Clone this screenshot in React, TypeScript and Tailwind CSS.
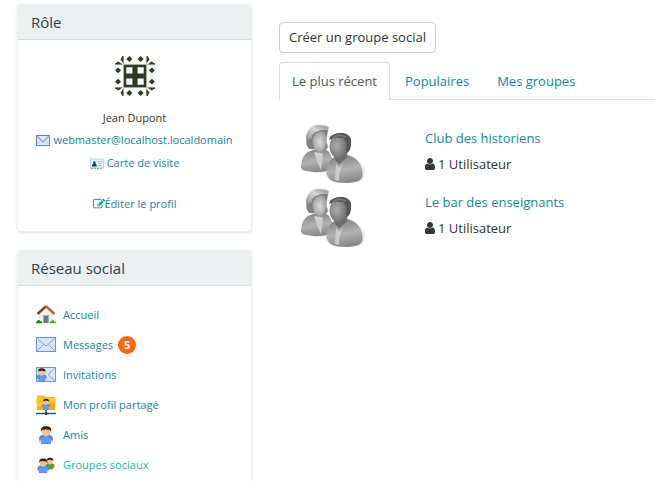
import type { ReactNode } from "react";

function Identicon() {
  const dots = [
    [14, 3], [25, 3], [14, 36], [25, 36],
    [3, 14], [3, 25], [36, 14], [36, 25],
  ];
  return (
    <svg width="40" height="40" viewBox="0 0 39 39" fill="#2c3a1d" role="img" aria-label="Avatar">
      <path d="M8.5 0v39M30.5 0v39M0 8.5h39M0 30.5h39" stroke="#c3c5bd" strokeWidth="0.7" />
      <rect x="8.5" y="8.5" width="22" height="22" />
      <path fill="#fff" d="M11 11h6v6h-6zM22 11h6v6h-6zM11 22h6v6h-6zM22 22h6v6h-6z" />
      {dots.map(([x, y]) => (
        <path key={`${x}-${y}`} d="M0-2.9L2.9 0 0 2.9-2.9 0z" transform={`translate(${x} ${y})`} />
      ))}
      {[0, 90, 180, 270].map((a) => (
        <path key={a} transform={`rotate(${a} 19.5 19.5)`} d="M8.3 0v7L5.4 3.5 7.3 0zM0 8.2h7.2L3.2 5.4 0 7.3z" />
      ))}
    </svg>
  );
}

function Envelope({ small = false }: { small?: boolean }) {
  return small ? (
    <svg width="14" height="11" viewBox="0 0 14 11" fill="none" aria-hidden="true">
      <rect x="0.5" y="0.5" width="13" height="10" fill="#deebfc" stroke="#5d83c9" />
      <path d="M1 9.5l4-4M13 9.5l-4-4" stroke="#b6cdf0" />
      <path d="M1.5 1.5L7 7l5.5-5.5" stroke="#87a6df" strokeWidth="1.3" />
    </svg>
  ) : (
    <svg width="20" height="20" viewBox="0 0 20 20" fill="none" aria-hidden="true">
      <rect x="0.5" y="2.5" width="19" height="14" fill="#d5e5fb" stroke="#6f94d2" />
      <path d="M1.5 15.5l6-6M18.5 15.5l-6-6M1.5 3.5l7.5 7h2l7.5-7" stroke="#83a5da" />
    </svg>
  );
}

function Card() {
  return (
    <svg width="14" height="11" viewBox="0 0 14 11" aria-hidden="true">
      <rect x="0.5" y="1" width="13" height="9" fill="#e4eff2" stroke="#b9dbe3" />
      <path d="M1 10.3h12" stroke="#58aabd" strokeDasharray="2 1" />
      <path fill="#123f50" d="M2 8.5V7l1.2-1V3.5h2.3V6l1.2 1v1.5z" />
      <path d="M7.5 3.5h5M8 5.5h4M8 7.5h4" stroke="#b9c1c4" />
    </svg>
  );
}

function EditIcon() {
  return (
    <svg width="12" height="12" viewBox="0 0 1792 1792" fill="currentColor" aria-hidden="true">
      <path d="M888 1184l116-116-152-152-116 116v56h96v96h56zm440-720q-16-16-33 1l-350 350q-17 17-1 33t33-1l350-350q17-17 1-33zm80 594v190q0 119-84.5 203.5t-203.5 84.5h-832q-119 0-203.5-84.5t-84.5-203.5v-832q0-119 84.5-203.5t203.5-84.5h832q63 0 117 25 15 7 18 23 3 17-9 29l-49 49q-14 14-32 8-23-6-45-6h-832q-66 0-113 47t-47 113v832q0 66 47 113t113 47h832q66 0 113-47t47-113v-126q0-13 9-22l64-64q15-15 35-7t20 29zm-96-738l288 288-672 672h-288v-288zm444 132l-92 92-288-288 92-92q28-28 68-28t68 28l152 152q28 28 28 68t-28 68z" />
    </svg>
  );
}

function UserIcon() {
  return (
    <svg width="10" height="14" viewBox="0 0 1280 1792" fill="#333" aria-hidden="true">
      <path d="M1280 1399q0 109-62.5 187t-150.5 78h-854q-88 0-150.5-78t-62.5-187q0-85 8.5-160.5t31.5-152 58.5-131 94-89 134.5-34.5q131 128 313 128t313-128q76 0 134.5 34.5t94 89 58.5 131 31.5 152 8.5 160.5zm-256-887q0 159-112.5 271.5t-271.5 112.5-271.5-112.5-112.5-271.5 112.5-271.5 271.5-112.5 271.5 112.5 112.5 271.5z" />
    </svg>
  );
}

function House() {
  return (
    <svg width="20" height="20" viewBox="0 0 20 20" aria-hidden="true">
      <path fill="#f2f2f2" stroke="#d5d5d5" strokeWidth="0.6" d="M3.5 17.5V8.5L10 3l6.5 5.5v9z" />
      <path d="M7 10h6v8H7z" fill="#aaa" />
      <path d="M8 11h4v7H8z" fill="#777" />
      <path d="M1.5 9L10 1.2" stroke="#8a3c12" strokeWidth="2.4" fill="none" />
      <path d="M10 1.2L18.500 9" stroke="#bb6538" strokeWidth="2.400" fill="none" />
      <path d="M0 18.300c0-2 1.500-2 2-3 1-.8 2 0 2.200 1 1.500-.5 2 .5 2 2z" fill="#128512" />
      <path d="M13.500 18.300c0-2 1.500-2 2-2.300 1-1.500 2.500-1 2.500.3 1.500 0 2 .7 2 2z" fill="#49b012" />
    </svg>
  );
}

function Figure({ shirt = "#4d8df0" }: { shirt?: string }) {
  return (
    <g>
      <path d="M3 14c0-3 2.200-4.200 4-4.200h6c2 0 4 1.200 4 4.200l-.5 2H15v3H5v-3H3.500z" fill={shirt} />
      <path d="M5.300 12.500h9.400v5.800H5.300z" fill="#69a7fa" opacity={shirt === "#4d8df0" ? 0.6 : 0} />
      <path d="M7.500 9.500h5L10 12z" fill="#f4b98b" />
      <circle cx="4.200" cy="16.300" r="1.200" fill="#f6b98c" />
      <circle cx="15.800" cy="16.300" r="1.200" fill="#f6b98c" />
      <ellipse cx="10" cy="6.500" rx="4.300" ry="4.500" fill="#f8bd91" />
      <path d="M5 7C4.500 3 6.500 1 10 1.200c4 0 6 2 5 5.800l-1.200-2.300c-2 .5-3-.2-4-.7C8.500 5 7 5 6 4.700z" fill="#30221d" />
    </g>
  );
}

function Invitation() {
  return (
    <svg width="20" height="20" viewBox="0 0 20 20" aria-hidden="true">
      <path d="M.5 2.500h19v14H.5z" fill="#d5e5fb" stroke="#6f94d2" />
      <path d="M18.500 3.500L12 9.500l6.500 6" stroke="#83a5da" fill="none" />
      <g transform="translate(-1.500 2.500) scale(.72)"><Figure /></g>
    </svg>
  );
}

function Folder() {
  return (
    <svg width="20" height="20" viewBox="0 0 20 20" aria-hidden="true">
      <path d="M1 2V.5h7L9.500 2H19v4H1z" fill="#f0bc23" />
      <path d="M0 3.500h20L19 15H1z" fill="#ffc928" />
      <path d="M1 12l18-5v8H1z" fill="#ffa70e" />
      <path d="M0 18.500h20M10 15v4" stroke="#235e82" strokeWidth="1.600" />
      <circle cx="10" cy="18.500" r="1.500" fill="#133f5c" />
      <g transform="translate(4 3) scale(.6)"><Figure /></g>
    </svg>
  );
}

function Friend() {
  return <svg width="20" height="20" viewBox="0 0 20 20" aria-hidden="true"><Figure /></svg>;
}

function Friends() {
  return (
    <svg width="20" height="20" viewBox="0 0 20 20" aria-hidden="true">
      <g transform="translate(7.500 2) scale(.65)"><Figure shirt="#5fa01a" /></g>
      <g transform="translate(-1 2.500) scale(.82)"><Figure /></g>
    </svg>
  );
}

function GroupPicture({ id }: { id: string }) {
  return (
    <svg width="64" height="64" viewBox="0 0 64 64" aria-hidden="true">
      <defs>
        <linearGradient id={`${id}-body`} x1="0" y1="0" x2="0.2" y2="1">
          <stop stopColor="#7c7c7c" /><stop offset=".6" stopColor="#b2b2b2" /><stop offset="1" stopColor="#8b8b8b" />
        </linearGradient>
        <radialGradient id={`${id}-pale`} cx=".5" cy=".55">
          <stop stopColor="#dcdcdc" /><stop offset="1" stopColor="#a0a0a0" />
        </radialGradient>
        <linearGradient id={`${id}-cap`} x1="0" y1="1" x2=".8" y2="0">
          <stop stopColor="#8f8f8f" /><stop offset=".6" stopColor="#d6d6d6" /><stop offset="1" stopColor="#9c9c9c" />
        </linearGradient>
        <radialGradient id={`${id}-face`} cx=".4" cy=".45" r=".65">
          <stop stopColor="#adadad" /><stop offset="1" stopColor="#6c6c6c" />
        </radialGradient>
        <radialGradient id={`${id}-shade`}>
          <stop stopColor="#777" stopOpacity=".7" /><stop offset="1" stopColor="#777" stopOpacity="0" />
        </radialGradient>
      </defs>
      <ellipse cx="54" cy="50" rx="11" ry="12" fill={`url(#${id}-shade)`} />
      <path d="M8 27C4 22 5 13 7 10c3-4 7-6 12-6 4 0 7 1 8 4l-2 12c3 4 2 8-2 8z" fill="#808080" />
      <path d="M0 45c0-9 4-15 12-17l10-1c7 1 10 7 10 20-7 4-23 4-30 1-2-1-2-2-2-3z" fill={`url(#${id}-body)`} />
      <path d="M13 30l8 1 1 3-2 14-4-9z" fill="#cdcdcd" />
      <ellipse cx="18.500" cy="19" rx="7" ry="11" fill={`url(#${id}-pale)`} />
      <path d="M5 17C5 9 10 3 17 3c6 0 10 1 11 3l-1 3c-6-1-12 1-15 5-2 3-5 5-7 3z" fill={`url(#${id}-cap)`} />
      <path d="M11 15c3-5 9-7 16-6" stroke="#757575" strokeWidth="1.200" fill="none" />
      <path d="M25.500 50c0-8 4-14 10-16l11-1c10 3 15 9 15 20 0 6-7 8-17 8-12 0-19-3-19-11z" fill={`url(#${id}-body)`} />
      <path d="M35 42l3 3 4-3c-3 5-4 11-4 17l-4-1z" fill="#cbcbcb" />
      <path d="M34 33l12-4v5c-2 4-5 6-8 8l-4-4z" fill="#6c6c6c" />
      <path d="M29 17c2-4 6-6 11-6 7 0 11 4 10 11 0 4-1 7-4 9l-6-8z" fill="#555" />
      <ellipse cx="37" cy="24.500" rx="8.500" ry="11.500" fill={`url(#${id}-face)`} />
      <path d="M28 18c1-5 6-7 12-7s10 4 10 8c-3-3-6-3-9-3-4-1-9-1-13 2z" fill="#555" />
      <path d="M32 15c4-2 9-2 13 0" stroke="#737373" strokeWidth="1.500" fill="none" />
    </svg>
  );
}

function Panel({ title, children }: { title: string; children: ReactNode }) {
  return (
    <section className="rounded border border-[#eeeeee] bg-white shadow-sm">
      <h2 className="rounded-t border-b border-[#d5dbdb] bg-[#ecf0f1] px-[13px] py-2 text-[15px] leading-[18px] text-[#2c3e50]">{title}</h2>
      {children}
    </section>
  );
}

const menu = [
  { label: "Accueil", icon: <House /> },
  { label: "Messages", icon: <Envelope />, count: 5 },
  { label: "Invitations", icon: <Invitation /> },
  { label: "Mon profil partagé", icon: <Folder /> },
  { label: "Amis", icon: <Friend /> },
  { label: "Groupes sociaux", icon: <Friends />, active: true },
];

const tabs = ["Le plus récent", "Populaires", "Mes groupes"];
const groups = [
  { id: "historiens", name: "Club des historiens" },
  { id: "enseignants", name: "Le bar des enseignants" },
];

export default function App() {
  return (
    <div className="flex h-screen items-start gap-[27px] overflow-hidden bg-white pl-[17px] font-['Open_Sans','Noto_Sans',sans-serif] text-[13px] leading-[18px] text-[#333]">
      <aside className="flex w-[235px] shrink-0 flex-col gap-[18px] pt-1">
        <Panel title="Rôle">
          <div className="flex flex-col items-center pt-4 pb-[18px] text-[11px] leading-[18px] text-[#0f87a3]">
            <Identicon />
            <p className="mt-[13px] text-[#333]">Jean Dupont</p>
            <a href="#mail" className="mt-1 flex items-center gap-[3px]"><Envelope small />webmaster@localhost.localdomain</a>
            <a href="#card" className="mt-[5px] flex items-center gap-[3px]"><Card />Carte de visite</a>
            <a href="#edit" className="mt-[23px] flex items-center"><EditIcon />Éditer le profil</a>
          </div>
        </Panel>
        <Panel title="Réseau social">
          <nav>
            <ul className="px-[18px] pt-[14px] pb-4 text-[11px]">
              {menu.map((item) => (
                <li key={item.label}>
                  <a href="#menu" className={`flex items-center gap-[7px] py-[5px] ${item.active ? "text-[#1abc9c]" : "text-[#0f87a3]"}`}>
                    {item.icon}
                    <span className="flex items-center gap-[5px]">
                      {item.label}
                      {item.count && <span className="flex h-[18px] w-[18px] items-center justify-center rounded-full bg-[#ff6600] font-bold text-white">{item.count}</span>}
                    </span>
                  </a>
                </li>
              ))}
            </ul>
          </nav>
        </Panel>
      </aside>
      <main className="min-w-0 flex-1 pt-[22px]">
        <button type="button" className="rounded border border-[#ccc] px-[9px] py-[5px] leading-[19px] text-[#333]">Créer un groupe social</button>
        <div role="tablist" className="mt-[9px] flex border-b border-[#ddd]">
          {tabs.map((tab, i) => (
            <button
              key={tab}
              type="button"
              role="tab"
              aria-selected={i === 0}
              className={`mr-[2px] -mb-px rounded-t border px-3 py-[9px] ${i === 0 ? "border-[#ddd] border-b-white bg-white text-[#555]" : "border-transparent text-[#0f87a3]"}`}
            >
              {tab}
            </button>
          ))}
        </div>
        <ul className="pt-[22px] pl-[22px]">
          {groups.map((group) => (
            <li key={group.id} className="flex gap-[60px]">
              <GroupPicture id={group.id} />
              <div className="pt-[7px]">
                <a href="#group" className="text-[#0f87a3]">{group.name}</a>
                <p className="mt-2 flex items-center gap-[3px]"><UserIcon />1 Utilisateur</p>
              </div>
            </li>
          ))}
        </ul>
      </main>
    </div>
  );
}
